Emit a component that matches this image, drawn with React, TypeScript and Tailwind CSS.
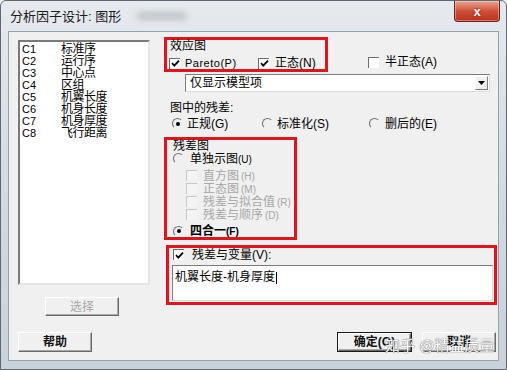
import React from 'react'

function CheckBox({ checked = false, disabled = false }: { checked?: boolean; disabled?: boolean }) {
  return (
    <span
      className={`flex h-[11px] w-[11px] shrink-0 items-center justify-center border-t-[1.5px] border-l-[1.5px] ${
        disabled ? 'border-[#c8c8c8] bg-[#f4f4f4]' : 'border-[#6e6e6e] bg-white'
      } border-r-0 border-b-0`}
    >
      {checked && (
        <svg width="9" height="9" viewBox="0 0 9 9">
          <path d="M1 4.2 L3.3 6.6 L8 1.6" fill="none" stroke="#000" strokeWidth="1.8" />
        </svg>
      )}
    </span>
  )
}

function Radio({ checked = false }: { checked?: boolean }) {
  return (
    <span className="flex h-[11px] w-[11px] shrink-0 items-center justify-center rounded-full border-[1.5px] border-t-[#6e6e6e] border-l-[#6e6e6e] border-r-transparent border-b-transparent">
      {checked && <span className="h-[4px] w-[4px] rounded-full bg-black" />}
    </span>
  )
}

function Button({ label, disabled = false, isDefault = false, className = '' }: { label: string; disabled?: boolean; isDefault?: boolean; className?: string }) {
  return (
    <div className={`${isDefault ? 'border border-[#1a1a1a]' : ''} ${className}`}>
      <div
        className={`flex h-full w-full items-center justify-center border border-t-white border-l-white border-r-[#6a6a6a] border-b-[#6a6a6a] bg-[#f0f0f0] text-[12px] leading-none shadow-[inset_-1px_-1px_0_#a8a8a8] ${
          disabled ? 'text-[#a8a8a8]' : 'font-bold text-[#111]'
        }`}
      >
        {label}
      </div>
    </div>
  )
}

const columns = [
  ['C1', '标准序'],
  ['C2', '运行序'],
  ['C3', '中心点'],
  ['C4', '区组'],
  ['C5', '机翼长度'],
  ['C6', '机身长度'],
  ['C7', '机身厚度'],
  ['C8', '飞行距离'],
]

const residualPlots = [
  ['直方图', '(H)'],
  ['正态图', '(M)'],
  ['残差与拟合值', '(R)'],
  ['残差与顺序', '(D)'],
]

export default function App() {
  return (
    <div className="relative flex h-[370px] w-[507px] flex-col overflow-hidden rounded-t-[6px] border border-[#5f6872] bg-gradient-to-b from-[#e6eaef] via-[#d3dae2] to-[#c9d1da] font-['Liberation_Sans','Noto_Sans_CJK_SC',sans-serif] whitespace-nowrap text-black">
      {/* title bar */}
      <div className="flex h-[30px] shrink-0 items-start">
        <span className="ml-[9px] mt-[8px] text-[13px] leading-[15px] text-[#1c1c1c]">分析因子设计: 图形</span>
        <span className="ml-[16px] mt-[11px] h-[8px] w-[50px] rounded-full bg-[#9aa0a8] opacity-50 blur-[3px]" />
        <div className="ml-auto mr-[6px] flex h-[21px] w-[46px] items-center justify-center rounded-b-[4px] border border-t-0 border-[#6e2418] bg-gradient-to-b from-[#e9a392] via-[#d0503a] to-[#b8301c] shadow-[inset_0_0_0_1px_rgba(255,255,255,0.35)]">
          <span className="text-[13px] font-bold leading-none text-white [text-shadow:0_0_2px_#6a1a10]">x</span>
        </div>
      </div>

      {/* client area */}
      <div className="mx-[7px] flex h-[330px] shrink-0 flex-col border border-[#97a1ab] bg-[#f0f0f0] text-[12px]">
        <div className="flex">
          {/* left column */}
          <div className="ml-[9px] mt-[8px] flex flex-col">
            <div className="h-[245px] w-[132px] border-2 border-t-[#7a7a7a] border-l-[#7a7a7a] border-r-[#e4e4e4] border-b-[#e4e4e4] bg-white pt-[1px]">
              {columns.map(([c, name]) => (
                <div key={c} className="flex h-[12px] items-center leading-none">
                  <span className="w-[41px] pl-[2px] text-[11px]">{c}</span>
                  <span className="text-[12px] tracking-[-0.5px]">{name}</span>
                </div>
              ))}
            </div>
            <Button label="选择" disabled className="ml-[27px] mt-[12px] h-[19px] w-[74px]" />
          </div>

          {/* right column */}
          <div className="ml-[14px] mt-[5px] flex flex-col">
            <div className="flex items-start">
              <div className="flex h-[35px] w-[164px] flex-col border-[3px] border-[#e0141c]">
                <span className="pl-[3px] leading-[13px]">效应图</span>
                <div className="mt-[1px] flex items-center pl-[2px]">
                  <div className="flex w-[89px] items-center gap-[5px]">
                    <CheckBox checked />
                    <span className="text-[11px] tracking-[0.5px]">Pareto(P)</span>
                  </div>
                  <div className="flex items-center gap-[6px]">
                    <CheckBox checked />
                    <span>正态(N)</span>
                  </div>
                </div>
              </div>
              <div className="ml-[40px] mt-[16px] flex items-center gap-[6px]">
                <CheckBox />
                <span>半正态(A)</span>
              </div>
            </div>

            <div className="ml-[21px] mt-[2px] flex h-[18px] w-[305px] items-center border border-t-[#7a7a7a] border-l-[#7a7a7a] border-r-[#dcdcdc] border-b-[#dcdcdc] bg-white">
              <span className="pl-[4px] leading-none">仅显示模型项</span>
              <div className="ml-auto mr-[1px] flex h-[14px] w-[13px] items-center justify-center border border-t-white border-l-white border-r-[#7a7a7a] border-b-[#7a7a7a] bg-[#f0f0f0]">
                <svg width="7" height="4" viewBox="0 0 7 4">
                  <path d="M0 0 H7 L3.5 4 Z" fill="#000" />
                </svg>
              </div>
            </div>

            <span className="ml-[6px] mt-[10px] leading-[13px]">图中的残差:</span>
            <div className="ml-[8px] mt-[2px] flex h-[13px] items-center">
              <div className="flex w-[90px] items-center gap-[4px]">
                <Radio checked />
                <span>正规(G)</span>
              </div>
              <div className="flex w-[107px] items-center gap-[4px]">
                <Radio />
                <span>标准化(S)</span>
              </div>
              <div className="flex items-center gap-[5px]">
                <Radio />
                <span>删后的(E)</span>
              </div>
            </div>

            <div className="mt-[7px] flex h-[103px] w-[133px] flex-col border-[3px] border-[#e0141c]">
              <span className="pl-[6px] leading-[12px]">残差图</span>
              <div className="flex h-[13px] items-center gap-[6px] pl-[6px]">
                <Radio />
                <span>
                  单独示图<span className="text-[10px]">(U)</span>
                </span>
              </div>
              <div className="mt-[4px] flex flex-col">
                {residualPlots.map(([p, key]) => (
                  <div key={p} className="flex h-[13px] items-center gap-[6px] pl-[19px] text-[#a6a6a6]">
                    <CheckBox disabled />
                    <span className="leading-none">
                      {p}
                      <span className="ml-[2px] text-[10px]">{key}</span>
                    </span>
                  </div>
                ))}
              </div>
              <div className="mt-[4px] flex h-[12px] items-center gap-[6px] pl-[6px]">
                <Radio checked />
                <span className="font-bold">
                  四合一<span className="text-[10px]">(F)</span>
                </span>
              </div>
            </div>

            <div className="ml-[2px] mt-[5px] flex h-[60px] w-[331px] flex-col border-[3px] border-[#e0141c]">
              <div className="flex h-[13px] items-center gap-[8px] pl-[4px]">
                <CheckBox checked />
                <span>残差与变量(V):</span>
              </div>
              <div className="ml-[3px] mt-[4px] h-[36px] w-[321px] border border-t-[#7a7a7a] border-l-[#7a7a7a] border-r-[#dcdcdc] border-b-[#dcdcdc] bg-white pl-[2px] pt-[2px]">
                <span className="leading-[14px]">机翼长度-机身厚度</span>
                <span className="ml-[1px] inline-block h-[12px] w-[1px] bg-black align-middle" />
              </div>
            </div>
          </div>
        </div>

        {/* bottom buttons */}
        <div className="mt-[16px] flex">
          <Button label="帮助" className="ml-[9px] h-[20px] w-[74px]" />
          <Button label="确定(O)" isDefault className="ml-auto h-[20px] w-[75px]" />
          <Button label="取消" className="ml-[10px] mr-[2px] h-[20px] w-[74px]" />
        </div>
      </div>

      {/* watermark */}
      <span className="absolute left-[384px] top-[335px] text-[15px] leading-[20px] text-white opacity-90 [text-shadow:0_0_1px_#555,0_0_1px_#555]">
        知乎 @精益质量
      </span>
    </div>
  )
}
